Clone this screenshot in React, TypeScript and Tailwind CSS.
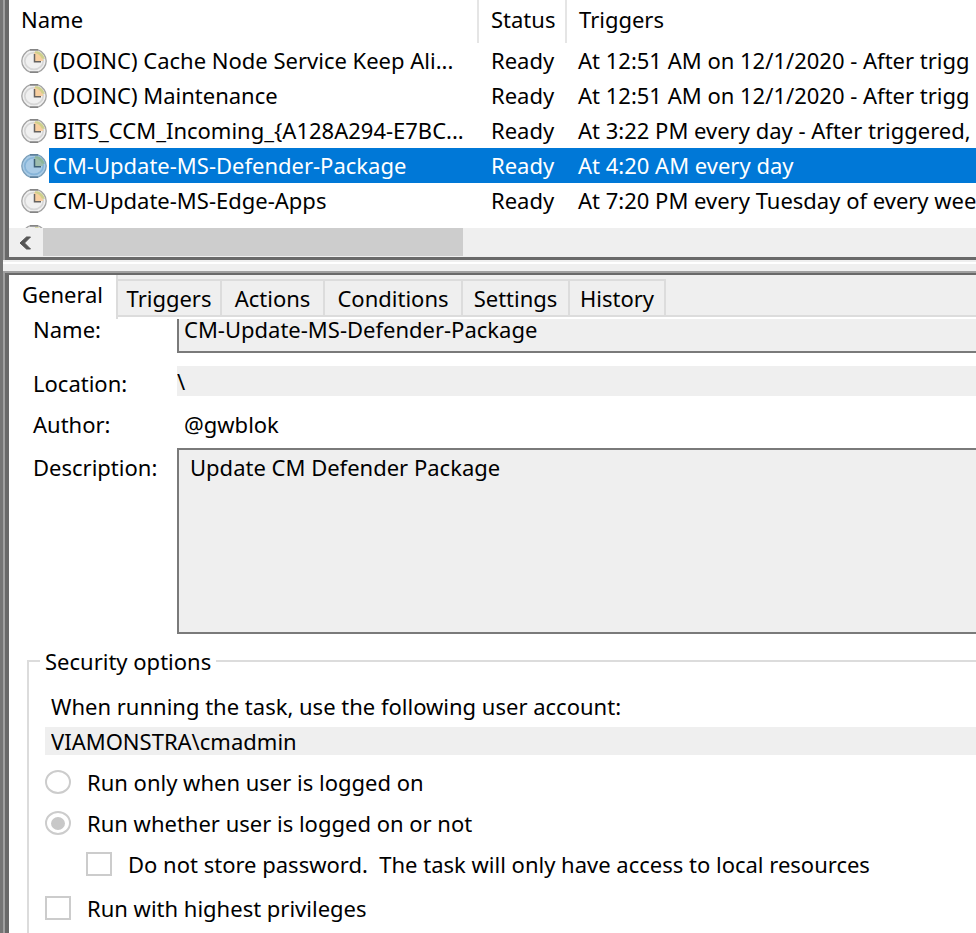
import { useState } from "react";

type Task = { name: string; status: string; triggers: string };

const tasks: Task[] = [
  { name: "(DOINC) Cache Node Service Keep Ali...", status: "Ready", triggers: "At 12:51 AM on 12/1/2020 - After trigg" },
  { name: "(DOINC) Maintenance", status: "Ready", triggers: "At 12:51 AM on 12/1/2020 - After trigg" },
  { name: "BITS_CCM_Incoming_{A128A294-E7BC...", status: "Ready", triggers: "At 3:22 PM every day - After triggered," },
  { name: "CM-Update-MS-Defender-Package", status: "Ready", triggers: "At 4:20 AM every day" },
  { name: "CM-Update-MS-Edge-Apps", status: "Ready", triggers: "At 7:20 PM every Tuesday of every wee" },
];

const tabs = [
  { label: "General", width: "w-[109px]" },
  { label: "Triggers", width: "w-[104px]" },
  { label: "Actions", width: "w-[103px]" },
  { label: "Conditions", width: "w-[138px]" },
  { label: "Settings", width: "w-[107px]" },
  { label: "History", width: "w-[96px]" },
];

function ClockIcon({ selected = false }: { selected?: boolean }) {
  const face = selected ? "#a9cbe6" : "#f0f0f0";
  const ring = selected ? "#7b9fba" : "#a3a3a3";
  const inner = selected ? "#86b4d8" : "#d6d6d6";
  return (
    <svg width="26" height="24" viewBox="0 0 26 24" className="shrink-0" aria-hidden="true">
      <path d="M9 .900h8Q20.500 2 23 5.500 25.200 8.500 25.200 12T23 18.500Q20.500 22 17 23.100H9Q5.500 22 3 18.500 .800 15.500 .800 12T3 5.500Q5.500 2 9 .900z" fill={face} stroke={ring} strokeWidth="1.300" />
      <path d="M9 .800h8M9 23.200h8" stroke={selected ? "#4c6f8a" : "#747474"} strokeWidth="1.200" />
      <ellipse cx="13" cy="12" rx="9.200" ry="8.400" fill="none" stroke={inner} strokeWidth="1.700" />
      <path d="M13 3.500q8 .5 9.500 8.500H13z" fill={selected ? "#9dbcae" : "#f8cfa0"} />
      <path d="M14 2.200h3Q22.500 4.500 23.800 10l-3-.5Q19 5 14 4z" fill={selected ? "#8bb59a" : "#cfd08c"} />
      <path d="M13.500 5v7.700H20" fill="none" stroke={selected ? "#3f6077" : "#66625f"} strokeWidth="1.500" />
    </svg>
  );
}

function TaskList({ selected, onSelect }: { selected: number; onSelect: (i: number) => void }) {
  return (
    <section className="border-b-3 border-l-4 border-b-[#696969] border-l-[#696969] bg-white">
      <div className="h-[228px] overflow-hidden">
        <table className="w-full table-fixed border-collapse whitespace-nowrap text-left">
          <colgroup>
            <col className="w-[469px]" />
            <col className="w-[88px]" />
            <col />
          </colgroup>
          <thead>
            <tr className="h-[43px] align-top">
              <th className="border-r-2 border-[#e5e5e5] pt-1 pl-3 font-normal">Name</th>
              <th className="border-r-2 border-[#e5e5e5] pt-1 pl-3 font-normal">Status</th>
              <th className="pt-1 pl-3 font-normal">Triggers</th>
            </tr>
          </thead>
          <tbody>
            {tasks.map((t, i) => {
              const on = i === selected;
              const fill = on ? "bg-[#0078d7] text-white" : "";
              return (
                <tr key={i} className="h-[35px]" onClick={() => onSelect(i)} aria-selected={on}>
                  <td className="p-0">
                    <div className="flex h-[35px] items-center gap-[2px] pl-3">
                      <ClockIcon selected={on} />
                      <span className={`flex h-[35px] flex-1 items-center pb-px pl-1 ${fill}`}>{t.name}</span>
                    </div>
                  </td>
                  <td className={`p-0 pb-px pl-[13px] ${fill}`}>{t.status}</td>
                  <td className={`p-0 pb-px pl-3 ${fill}`}>{t.triggers}</td>
                </tr>
              );
            })}
            <tr>
              <td className="pt-[7px] pl-3">
                <ClockIcon />
              </td>
              <td />
              <td />
            </tr>
          </tbody>
        </table>
      </div>
      <div className="flex h-[29px] bg-[#efefef]">
        <button aria-label="Scroll left" className="flex w-[34px] items-center justify-center pr-[2px]">
          <svg width="12" height="14" viewBox="0 0 12 14" aria-hidden="true">
            <path d="M11.500 1H7.500L1 7l6.500 6h4L5.500 7z" fill="#555" stroke="#555" strokeWidth="1" />
          </svg>
        </button>
        <div className="mb-px w-[420px] bg-[#cdcdcd]" />
      </div>
    </section>
  );
}

function TabBar({ active, onChange }: { active: number; onChange: (i: number) => void }) {
  return (
    <div role="tablist" className="flex h-[44px] items-start border-b-2 border-white bg-[#efefef]">
      {tabs.map((t, i) =>
        i === active ? (
          <button key={t.label} role="tab" aria-selected="true" onClick={() => onChange(i)} className={`h-[44px] border-r-2 border-[#dcdcdc] bg-white pb-[6px] ${t.width}`}>
            {t.label}
          </button>
        ) : (
          <button key={t.label} role="tab" aria-selected="false" onClick={() => onChange(i)} className={`mt-1 h-[38px] border-y-2 border-r-2 border-[#dcdcdc] ${t.width}`}>
            {t.label}
          </button>
        )
      )}
      <div className="mt-[40px] flex-1 border-b-2 border-[#dcdcdc]" />
    </div>
  );
}

const box = "appearance-none shrink-0 w-[26px] h-6 border-2 border-[#cccccc] bg-white";
const dot = "appearance-none shrink-0 w-[26px] h-6 rounded-[50%] border-2 border-[#cccccc] bg-white flex items-center justify-center checked:before:block checked:before:h-[13px] checked:before:w-[14px] checked:before:rounded-[50%] checked:before:bg-[#c8c8c8]";

function GeneralPanel({ task }: { task: Task }) {
  return (
    <div>
      <div className="flex h-[34px]">
        <label htmlFor="name" className="w-[168px] shrink-0 pl-6 leading-5">Name:</label>
        <input id="name" readOnly value={task.name} className="min-w-0 flex-1 border-b-2 border-l-2 border-[#7a7a7a] bg-[#efefef] pb-3 pl-[5px] outline-none" />
      </div>
      <div className="mt-[13px] flex h-[30px]">
        <label htmlFor="location" className="w-[168px] shrink-0 pt-[2px] pl-6">Location:</label>
        <input id="location" readOnly value={"\\"} className="min-w-0 flex-1 bg-[#efefef] pb-px outline-none" />
      </div>
      <div className="mt-[13px] flex h-[30px]">
        <span className="w-[168px] shrink-0 pl-6">Author:</span>
        <span className="pl-[7px]">@gwblok</span>
      </div>
      <div className="mt-[9px] flex h-[186px]">
        <label htmlFor="description" className="w-[168px] shrink-0 pt-1 pl-6">Description:</label>
        <textarea id="description" readOnly value="Update CM Defender Package" className="min-w-0 flex-1 resize-none border-y-2 border-l-2 border-[#7a7a7a] bg-[#efefef] pt-[2px] pl-[11px] outline-none" />
      </div>
      <fieldset className="mt-3 ml-[18px] border-t-2 border-l-2 border-[#dcdcdc] pb-6 pl-4">
        <legend className="-ml-[5px] px-[5px]">Security options</legend>
        <label htmlFor="account" className="mt-[15px] block pl-[6px]">When running the task, use the following user account:</label>
        <input id="account" readOnly value="VIAMONSTRA\cmadmin" className="mt-[6px] block h-7 w-full bg-[#efefef] pl-[6px] outline-none" />
        <label className="mt-3 flex items-center gap-4">
          <input type="radio" name="run" disabled className={dot} />
          Run only when user is logged on
        </label>
        <label className="mt-[11px] flex items-center gap-4">
          <input type="radio" name="run" disabled defaultChecked className={dot} />
          Run whether user is logged on or not
        </label>
        <label className="mt-[11px] ml-[41px] flex items-center gap-4 whitespace-pre">
          <input type="checkbox" disabled className={box} />
          {"Do not store password.  The task will only have access to local resources"}
        </label>
        <label className="mt-[14px] flex items-center gap-4">
          <input type="checkbox" disabled className={box} />
          Run with highest privileges
        </label>
      </fieldset>
    </div>
  );
}

export default function App() {
  const [selected, setSelected] = useState(3);
  const [tab, setTab] = useState(0);
  return (
    <main className="h-screen overflow-hidden border-l-3 border-[#757575] bg-[#efefef] font-['Noto_Sans','Open_Sans',sans-serif] text-[22px] leading-[30px] text-black">
      <div className="border-l-2 border-[#a0a0a0]">
        <TaskList selected={selected} onSelect={setSelected} />
      </div>
      <div className="mt-[2px] h-[2px] bg-white" />
      <div className="mt-[7px] border-t-2 border-l-2 border-[#a0a0a0]">
        <section className="min-h-screen border-t-2 border-l-4 border-[#696969] bg-white">
          <TabBar active={tab} onChange={setTab} />
          <GeneralPanel task={tasks[selected]} />
        </section>
      </div>
    </main>
  );
}
